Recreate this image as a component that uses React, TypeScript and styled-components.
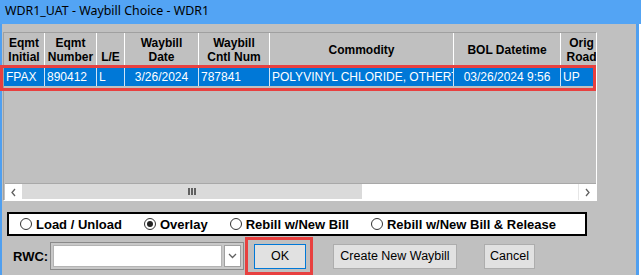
import React from 'react'
import styled, { createGlobalStyle } from 'styled-components'

const GlobalStyle = createGlobalStyle`
  html, body {
    margin: 0;
    padding: 0;
    background: #ffffff;
  }
  body {
    font-family: "Liberation Sans", Arial, sans-serif;
    overflow: hidden;
  }
`

const COLS = '41px 52px 28px 74px 71px 184px 107px 42px'

const columns = [
  { title: ['Eqmt', 'Initial'] },
  { title: ['Eqmt', 'Number'] },
  { title: ['L/E'], bottom: true },
  { title: ['Waybill', 'Date'] },
  { title: ['Waybill', 'Cntl Num'] },
  { title: ['Commodity'] },
  { title: ['BOL Datetime'] },
  { title: ['Orig', 'Road'] },
]

const row = [
  { text: 'FPAX' },
  { text: '890412' },
  { text: 'L' },
  { text: '3/26/2024', center: true },
  { text: '787841' },
  { text: 'POLYVINYL CHLORIDE, OTHERT' },
  { text: '03/26/2024 9:56', center: true },
  { text: 'UP' },
]

const options = [
  { label: 'Load / Unload', checked: false },
  { label: 'Overlay', checked: true },
  { label: 'Rebill w/New Bill', checked: false },
  { label: 'Rebill w/New Bill & Release', checked: false },
]

const Screen = styled.div`
  position: relative;
  width: 641px;
  height: 275px;
  overflow: hidden;
`

const TitleBar = styled.div`
  height: 24px;
  background: #53a4f4;
  color: #000;
  font-family: "Noto Sans", "Open Sans", sans-serif;
  font-size: 12.4px;
  line-height: 22px;
  padding-left: 5px;
`

const Window = styled.div`
  box-sizing: border-box;
  width: 639px;
  height: 251px;
  background: #c0c0c0;
  border-left: 2px solid #4f9ff0;
  border-right: 3px solid #4f9ff0;
  padding: 8px 0 0 1px;
  display: flex;
  flex-direction: column;
`

const Grid = styled.div`
  box-sizing: border-box;
  width: 594px;
  height: 169px;
  border-top: 1px solid #a0a0a0;
  border-left: 1px solid #a0a0a0;
  border-right: 1px solid #ffffff;
  border-bottom: 1px solid #ffffff;
  display: flex;
  flex-direction: column;
`

const TableArea = styled.div`
  flex: 1;
  overflow: hidden;
  background: #c0c0c0;
`

const HeaderRow = styled.div`
  display: grid;
  grid-template-columns: ${COLS};
  height: 34px;
`

const HeaderCell = styled.div<{ $bottom?: boolean }>`
  display: flex;
  flex-direction: column;
  align-items: center;
  justify-content: ${(p) => (p.$bottom ? 'flex-end' : 'center')};
  padding-bottom: ${(p) => (p.$bottom ? '3px' : '0')};
  border-right: 1px solid #ffffff;
  font-size: 12px;
  font-weight: bold;
  line-height: 14px;
  color: #000;
  white-space: nowrap;
  overflow: hidden;
`

const DataRow = styled.div`
  display: grid;
  grid-template-columns: ${COLS};
  height: 18px;
  margin-top: 1px;
  background: #0078d7;
`

const DataCell = styled.div<{ $center?: boolean }>`
  min-width: 0;
  padding: 0 2px;
  border-right: 1px solid #cfe3f6;
  color: #ffffff;
  font-size: 12px;
  line-height: 18px;
  text-align: ${(p) => (p.$center ? 'center' : 'left')};
  white-space: nowrap;
  overflow: hidden;
  text-overflow: clip;
`

const HScroll = styled.div`
  display: flex;
  height: 16px;
  margin: 0 0 0 1px;
  border-top: 1px solid #a8a8a8;
  background: #ffffff;
`

const ScrollButton = styled.div`
  width: 17px;
  display: flex;
  align-items: center;
  justify-content: center;
  background: #ffffff;
`

const Thumb = styled.div`
  width: 340px;
  background: #dadada;
  display: flex;
  align-items: center;
  justify-content: center;
  gap: 1px;
  margin-bottom: 1px;
`

const Grip = styled.span`
  width: 2px;
  height: 7px;
  background: #606060;
`

const Track = styled.div`
  flex: 1;
  background: #ffffff;
  border-right: 1px solid #e6e6e6;
`

const RadioBox = styled.div`
  box-sizing: border-box;
  margin: 11px 0 0 4px;
  width: 580px;
  height: 24px;
  border: 2px solid #000;
  background: #ffffff;
  display: flex;
  align-items: center;
  padding-left: 11px;
  gap: 22px;
`

const RadioItem = styled.label`
  display: flex;
  align-items: center;
  gap: 4px;
  font-size: 13px;
  font-weight: bold;
  color: #000;
  white-space: nowrap;
`

const RadioCircle = styled.span<{ $checked?: boolean }>`
  box-sizing: border-box;
  width: 12px;
  height: 12px;
  border: 1px solid #333;
  border-radius: 50%;
  background: #fff;
  display: flex;
  align-items: center;
  justify-content: center;
  &::after {
    content: '';
    display: ${(p) => (p.$checked ? 'block' : 'none')};
    width: 6px;
    height: 6px;
    border-radius: 50%;
    background: #222;
  }
`

const ActionRow = styled.div`
  display: flex;
  align-items: center;
  margin-top: 6px;
  padding-left: 10px;
  height: 28px;
`

const Label = styled.span`
  font-size: 13px;
  font-weight: bold;
  color: #000;
  width: 37px;
`

const Combo = styled.div`
  box-sizing: border-box;
  width: 194px;
  height: 28px;
  border: 1px solid #8a8a8a;
  padding: 2px;
  display: flex;
  gap: 2px;
  background: #c8c8c8;
`

const ComboField = styled.div`
  flex: 1;
  background: #ffffff;
  border: 1px solid #b4b4b4;
`

const ComboArrow = styled.div`
  box-sizing: border-box;
  width: 17px;
  background: #ffffff;
  border: 1px solid #a0a0a0;
  display: flex;
  align-items: center;
  justify-content: center;
`

const Button = styled.button<{ $w: number; $focus?: boolean; $ml: number }>`
  box-sizing: border-box;
  width: ${(p) => p.$w}px;
  height: 25px;
  margin-left: ${(p) => p.$ml}px;
  padding: 0;
  background: #e1e1e1;
  border: 1px solid ${(p) => (p.$focus ? '#0078d7' : '#adadad')};
  font-family: "Liberation Sans", Arial, sans-serif;
  font-size: 12.5px;
  color: #000;
`

const Highlight = styled.div<{ $x: number; $y: number; $w: number; $h: number }>`
  position: absolute;
  box-sizing: border-box;
  left: ${(p) => p.$x}px;
  top: ${(p) => p.$y}px;
  width: ${(p) => p.$w}px;
  height: ${(p) => p.$h}px;
  border: 3px solid #e8403f;
  pointer-events: none;
`

const Chevron = ({ dir }: { dir: 'left' | 'right' | 'down' }) => {
  const d =
    dir === 'left' ? 'M5 1 L2 4.5 L5 8' : dir === 'right' ? 'M2 1 L5 4.5 L2 8' : 'M1 2 L4.5 5.5 L8 2'
  const size = dir === 'down' ? { w: 9, h: 8 } : { w: 7, h: 9 }
  return (
    <svg width={size.w} height={size.h} viewBox={`0 0 ${size.w} ${size.h}`}>
      <path d={d} fill="none" stroke="#606060" strokeWidth="1.3" />
    </svg>
  )
}

export default function App() {
  return (
    <Screen>
      <GlobalStyle />
      <TitleBar>WDR1_UAT - Waybill Choice - WDR1</TitleBar>
      <Window>
        <Grid>
          <TableArea>
            <HeaderRow>
              {columns.map((c, i) => (
                <HeaderCell key={i} $bottom={c.bottom}>
                  {c.title.map((t) => (
                    <span key={t}>{t}</span>
                  ))}
                </HeaderCell>
              ))}
            </HeaderRow>
            <DataRow>
              {row.map((c, i) => (
                <DataCell key={i} $center={c.center}>
                  {c.text}
                </DataCell>
              ))}
            </DataRow>
          </TableArea>
          <HScroll>
            <ScrollButton>
              <Chevron dir="left" />
            </ScrollButton>
            <Thumb>
              <Grip />
              <Grip />
              <Grip />
            </Thumb>
            <Track />
            <ScrollButton>
              <Chevron dir="right" />
            </ScrollButton>
          </HScroll>
        </Grid>

        <RadioBox>
          {options.map((o) => (
            <RadioItem key={o.label}>
              <RadioCircle $checked={o.checked} />
              {o.label}
            </RadioItem>
          ))}
        </RadioBox>

        <ActionRow>
          <Label>RWC:</Label>
          <Combo>
            <ComboField />
            <ComboArrow>
              <Chevron dir="down" />
            </ComboArrow>
          </Combo>
          <Button $w={52} $ml={10} $focus>
            OK
          </Button>
          <Button $w={124} $ml={27}>
            Create New Waybill
          </Button>
          <Button $w={51} $ml={27}>
            Cancel
          </Button>
        </ActionRow>
      </Window>

      <Highlight $x={0} $y={65} $w={596} $h={26} />
      <Highlight $x={245} $y={237} $w={68} $h={38} />
    </Screen>
  )
}
